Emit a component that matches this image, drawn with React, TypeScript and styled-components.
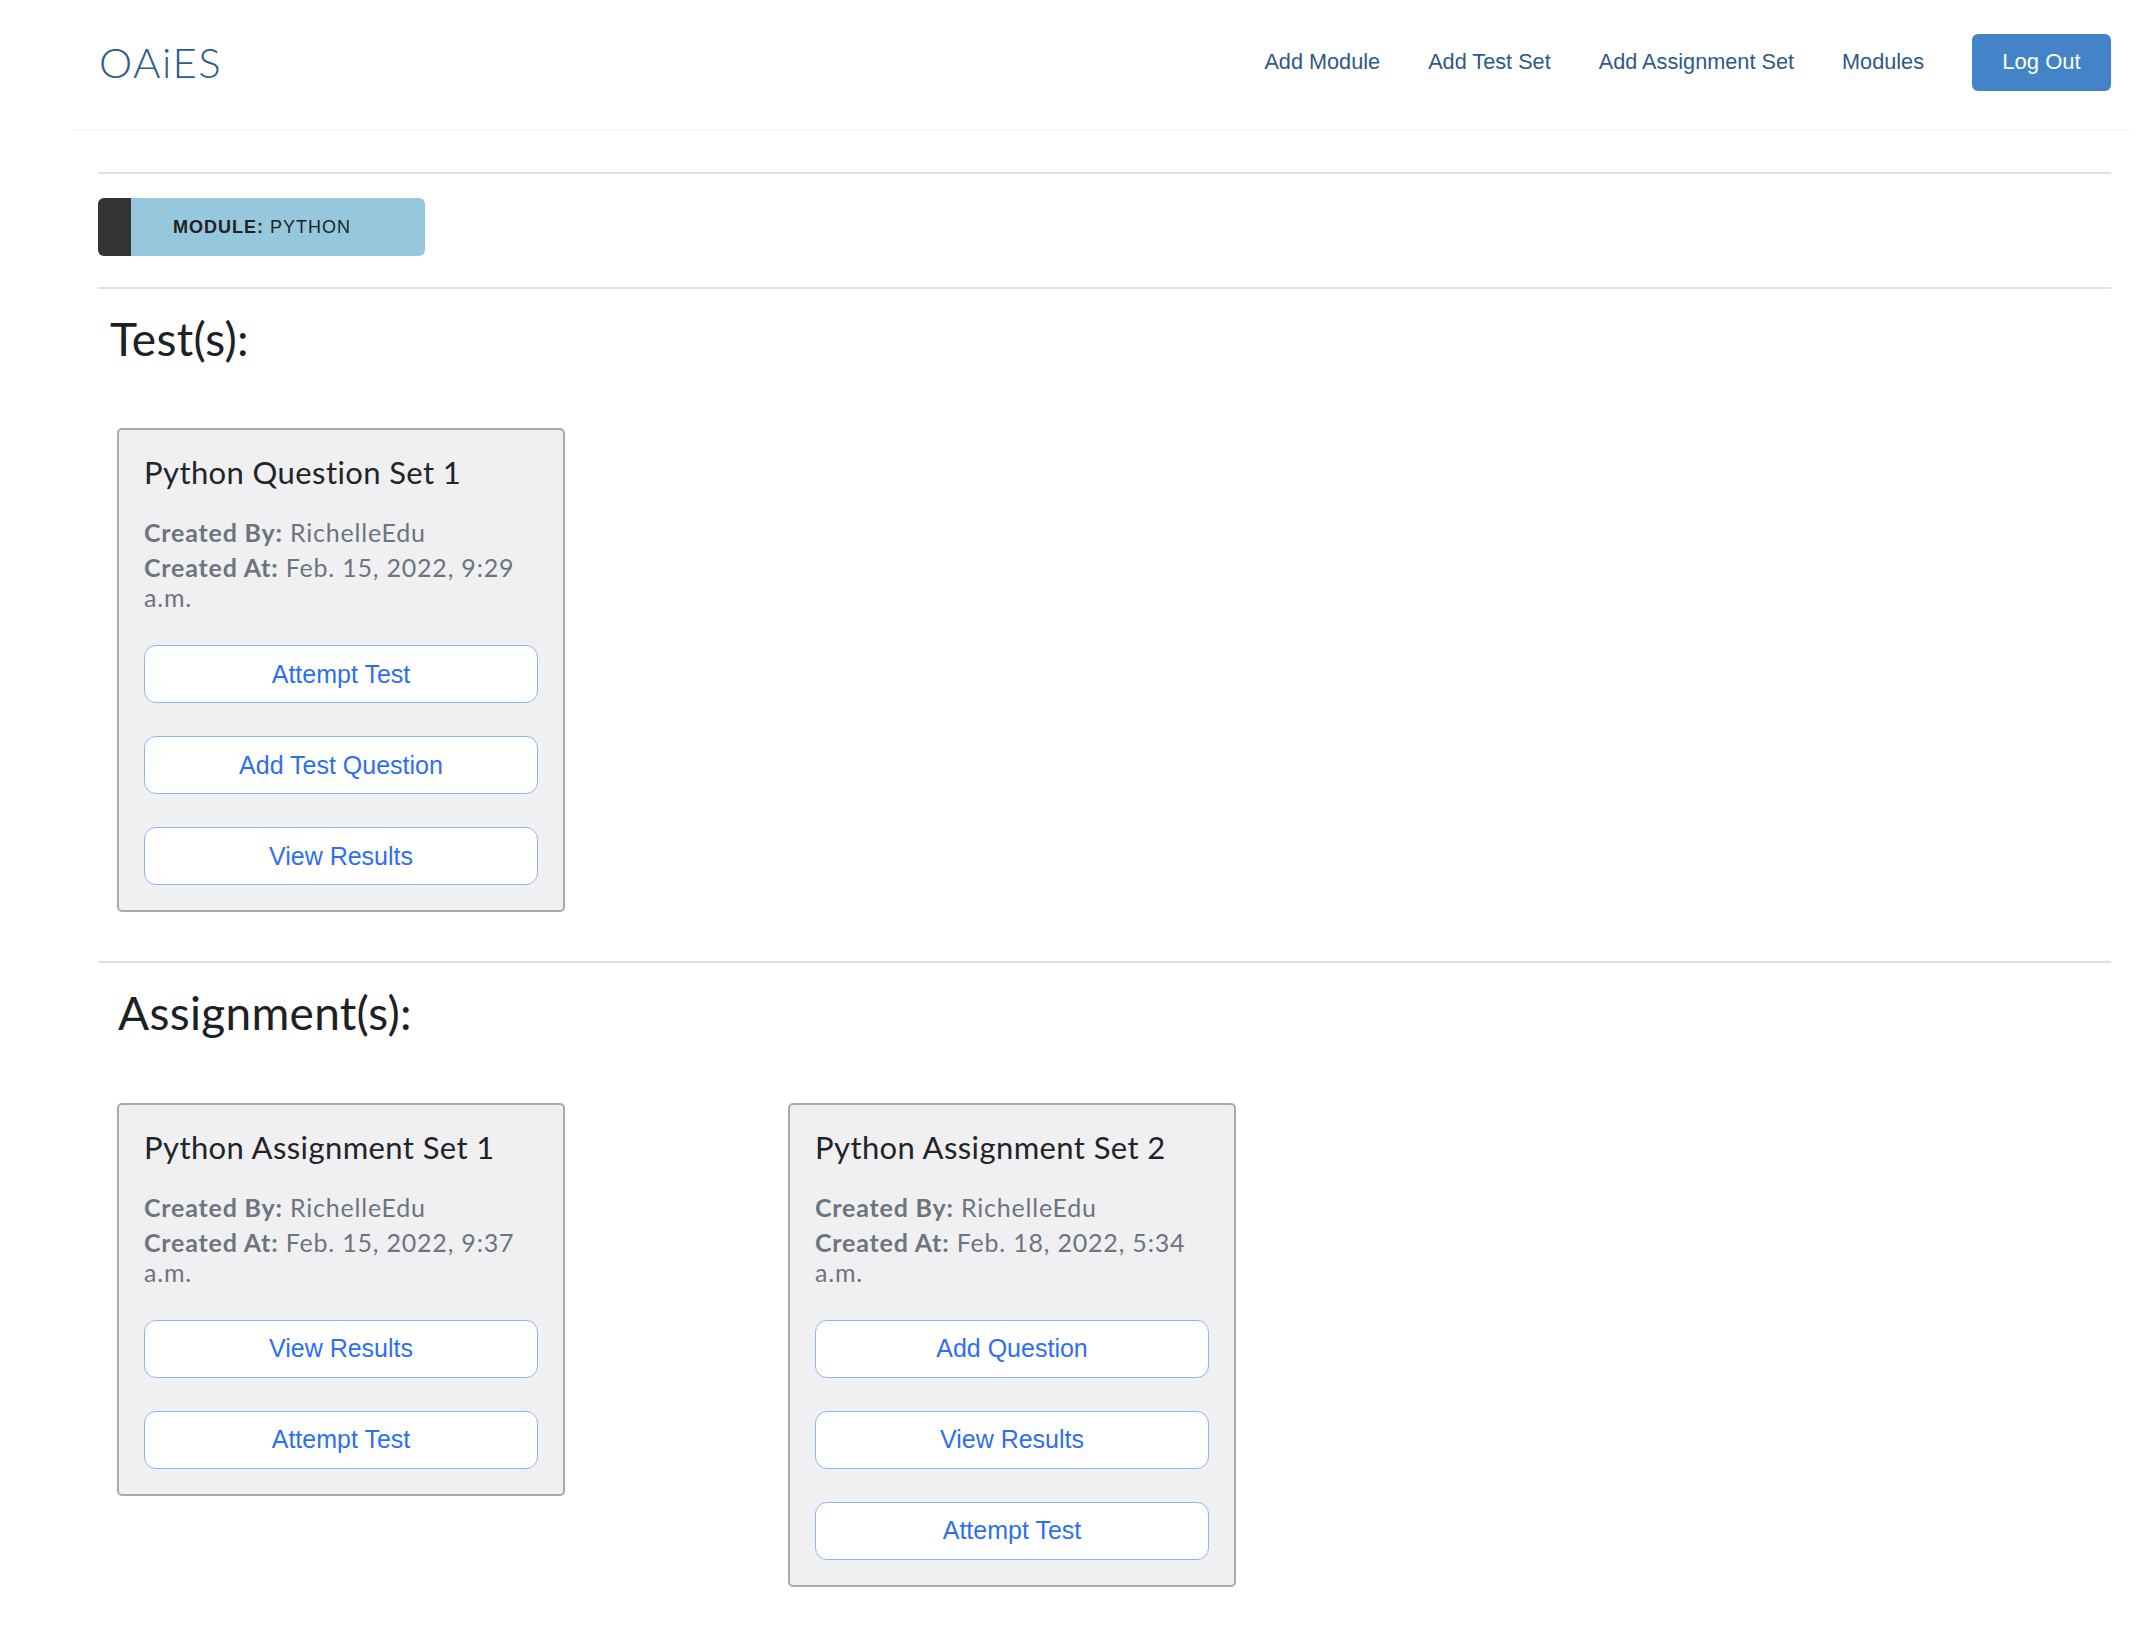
import styled, { createGlobalStyle } from 'styled-components';

const GlobalStyle = createGlobalStyle`
  body {
    margin: 0;
    background: #ffffff;
    font-family: Lato, "Open Sans", sans-serif;
    color: #212529;
  }
`;

const ScHeader = styled.header`
  display: flex;
  align-items: center;
  height: 130px;
  box-sizing: border-box;
  margin: 0 25px 0 72px;
  padding: 0 20px 5px 27px;
  border-bottom: 1px solid #f1f4f8;
`;

const ScLogo = styled.a`
  font-family: Lato, sans-serif;
  font-size: 42px;
  font-weight: 300;
  letter-spacing: 1.5px;
  color: #2d5d8e;
  text-decoration: none;
  margin-right: auto;
`;

const ScNav = styled.nav`
  display: flex;
  align-items: center;
  gap: 48px;
`;

const ScNavLink = styled.a`
  font-family: 'Liberation Sans', Arial, sans-serif;
  font-size: 21.7px;
  color: #2d5a86;
  text-decoration: none;
`;

const ScLogout = styled.button`
  width: 139px;
  height: 57px;
  border: none;
  border-radius: 6px;
  background: #4384c8;
  color: #ffffff;
  font-family: 'Liberation Sans', Arial, sans-serif;
  font-size: 22px;
`;

const ScMain = styled.main`
  width: 2013px;
  margin: 42px 0 0 98px;
`;

const ScRule = styled.div`
  border-top: 2px solid #e0e0e0;
`;

const ScModuleBar = styled.div`
  padding: 24px 0 31px;
`;

const ScBadge = styled.div`
  display: flex;
  align-items: center;
  width: 327px;
  height: 58px;
  box-sizing: border-box;
  border-left: 33px solid #333333;
  border-radius: 6px;
  background: #95c8dc;
  padding-left: 42px;
  font-family: 'Liberation Sans', Arial, sans-serif;
  font-size: 18px;
  letter-spacing: 1px;
  color: #222222;

  b {
    margin-right: 6px;
  }
`;

const ScHeading = styled.h2<{ $indent: number }>`
  margin: 22px 0 62px;
  padding-left: ${(p) => p.$indent}px;
  font-size: 46px;
  font-weight: 400;
  letter-spacing: 0.3px;
  line-height: 1.2;
  color: #1d2124;
`;

const ScGrid = styled.div`
  display: grid;
  grid-template-columns: repeat(3, 671px);
  align-items: start;
  padding-bottom: 49px;
`;

const ScCard = styled.div`
  width: 448px;
  box-sizing: border-box;
  margin-left: 19px;
  padding: 24px 25px 25px;
  border: 2px solid #a9a9ab;
  border-radius: 5px;
  background: #f0f0f2;
`;

const ScCardTitle = styled.h5`
  margin: 0 0 26px;
  font-size: 31px;
  font-weight: 400;
  letter-spacing: 0.4px;
  line-height: 1.2;
  color: #222428;
`;

const ScMeta = styled.p`
  margin: 0 0 5px;
  max-width: 375px;
  font-size: 25px;
  letter-spacing: 0.8px;
  line-height: 30px;
  color: #6c757d;

  b {
    font-weight: 700;
  }

  &:last-of-type {
    margin-bottom: 33px;
  }
`;

const ScActions = styled.div`
  display: flex;
  flex-direction: column;
  gap: 33px;
`;

const ScActionBtn = styled.button`
  height: 58px;
  width: 100%;
  border: 1.5px solid #8fb3f7;
  border-radius: 12px;
  background: #ffffff;
  color: #2d6ff0;
  font-family: 'Liberation Sans', Arial, sans-serif;
  font-size: 25px;
`;

interface SetDef {
  title: string;
  createdAt: string;
  actions: string[];
}

const tests: SetDef[] = [
  {
    title: 'Python Question Set 1',
    createdAt: 'Feb. 15, 2022, 9:29 a.m.',
    actions: ['Attempt Test', 'Add Test Question', 'View Results'],
  },
];

const assignments: SetDef[] = [
  {
    title: 'Python Assignment Set 1',
    createdAt: 'Feb. 15, 2022, 9:37 a.m.',
    actions: ['View Results', 'Attempt Test'],
  },
  {
    title: 'Python Assignment Set 2',
    createdAt: 'Feb. 18, 2022, 5:34 a.m.',
    actions: ['Add Question', 'View Results', 'Attempt Test'],
  },
];

function SetCard({ def }: { def: SetDef }) {
  return (
    <ScCard>
      <ScCardTitle>{def.title}</ScCardTitle>
      <ScMeta>
        <b>Created By:</b> RichelleEdu
      </ScMeta>
      <ScMeta>
        <b>Created At:</b> {def.createdAt}
      </ScMeta>
      <ScActions>
        {def.actions.map((a) => (
          <ScActionBtn key={a}>{a}</ScActionBtn>
        ))}
      </ScActions>
    </ScCard>
  );
}

export default function App() {
  return (
    <>
      <GlobalStyle />
      <ScHeader>
        <ScLogo>OAiES</ScLogo>
        <ScNav>
          <ScNavLink>Add Module</ScNavLink>
          <ScNavLink>Add Test Set</ScNavLink>
          <ScNavLink>Add Assignment Set</ScNavLink>
          <ScNavLink>Modules</ScNavLink>
          <ScLogout>Log Out</ScLogout>
        </ScNav>
      </ScHeader>

      <ScMain>
        <ScRule />
        <ScModuleBar>
          <ScBadge>
            <b>MODULE:</b> PYTHON
          </ScBadge>
        </ScModuleBar>
        <ScRule />

        <ScHeading $indent={12}>Test(s):</ScHeading>
        <ScGrid>
          {tests.map((t) => (
            <SetCard key={t.title} def={t} />
          ))}
        </ScGrid>

        <ScRule />
        <ScHeading $indent={20}>Assignment(s):</ScHeading>
        <ScGrid>
          {assignments.map((t) => (
            <SetCard key={t.title} def={t} />
          ))}
        </ScGrid>
      </ScMain>
    </>
  );
}
